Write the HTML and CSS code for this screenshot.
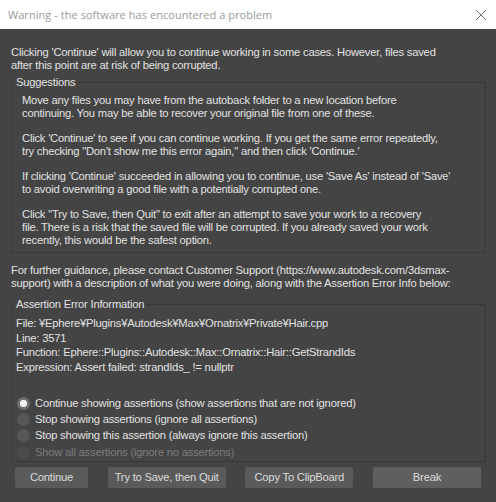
FILE: index.html
```html
<!DOCTYPE html>
<html>
<head>
<meta charset="utf-8">
<link rel="stylesheet" href="styles.css">
</head>
<body>
<div class="window">
  <div class="titlebar">
    <span class="title">Warning - the software has encountered a problem</span>
    <svg class="close" width="12" height="12" viewBox="0 0 12 12"><path d="M1 1 L11 11 M11 1 L1 11" stroke="#7a7a7a" stroke-width="1" fill="none"/></svg>
  </div>
  <div class="content">
    <p class="intro">Clicking 'Continue' will allow you to continue working in some cases. However, files saved<br>after this point are at risk of being corrupted.</p>
    <fieldset class="group suggestions">
      <legend>Suggestions</legend>
      <p class="para first">Move any files you may have from the autoback folder to a new location before<br>continuing. You may be able to recover your original file from one of these.</p>
      <p class="para">Click 'Continue' to see if you can continue working. If you get the same error repeatedly,<br>try checking "Don't show me this error again," and then click 'Continue.'</p>
      <p class="para">If clicking 'Continue' succeeded in allowing you to continue, use 'Save As' instead of 'Save'<br>to avoid overwriting a good file with a potentially corrupted one.</p>
      <p class="para">Click "Try to Save, then Quit" to exit after an attempt to save your work to a recovery<br>file. There is a risk that the saved file will be corrupted. If you already saved your work<br>recently, this would be the safest option.</p>
    </fieldset>
    <p class="guidance">For further guidance, please contact Customer Support (https://www.autodesk.com/3dsmax-<br>support) with a description of what you were doing, along with the Assertion Error Info below:</p>
    <fieldset class="group assertion">
      <legend>Assertion Error Information</legend>
      <div class="info first">File: ¥Ephere¥Plugins¥Autodesk¥Max¥Ornatrix¥Private¥Hair.cpp</div>
      <div class="info">Line: 3571</div>
      <div class="info">Function: Ephere::Plugins::Autodesk::Max::Ornatrix::Hair::GetStrandIds</div>
      <div class="info">Expression: Assert failed: strandIds_ != nullptr</div>
      <div class="radios">
        <div class="radio"><span class="dot checked"></span><span>Continue showing assertions (show assertions that are not ignored)</span></div>
        <div class="radio"><span class="dot"></span><span>Stop showing assertions (ignore all assertions)</span></div>
        <div class="radio"><span class="dot"></span><span>Stop showing this assertion (always ignore this assertion)</span></div>
        <div class="radio disabled"><span class="dot"></span><span>Show all assertions (ignore no assertions)</span></div>
      </div>
    </fieldset>
    <div class="buttons">
      <div class="btn w73">Continue</div>
      <div class="btn w118">Try to Save, then Quit</div>
      <div class="btn w108">Copy To ClipBoard</div>
      <div class="btn w108 default">Break</div>
    </div>
  </div>
</div>
</body>
</html>
```
FILE: styles.css
```css
html, body {
  margin: 0;
  padding: 0;
}
body {
  width: 496px;
  height: 502px;
  overflow: hidden;
  background: #444444;
}
.window {
  display: flex;
  flex-direction: column;
  height: 502px;
}
.titlebar {
  height: 29px;
  background: #ffffff;
  display: flex;
  align-items: center;
  justify-content: space-between;
  padding: 0 9px 0 8px;
  box-sizing: border-box;
}
.title {
  font-family: "Open Sans", "Liberation Sans", sans-serif;
  font-size: 11px;
  color: #9a9a9a;
  letter-spacing: 0.05px;
  margin-top: -1px;
}
.close {
  display: block;
}
.content {
  flex: 1;
  padding: 17px 10px 0 11px;
  font-family: "Liberation Sans", Arial, sans-serif;
  font-size: 11.2px;
  line-height: 13px;
  letter-spacing: -0.2px;
  color: #e2e2e2;
  white-space: nowrap;
}
p {
  margin: 0;
}
.group {
  margin: 0;
  padding: 0;
  border: 1px solid #393939;
  border-radius: 2px;
  min-width: 0;
}
.group legend {
  margin-left: 2px;
  padding: 0 2px;
  line-height: 13px;
}
.suggestions {
  margin-top: 4px;
  padding-bottom: 5px;
}
.para {
  padding-left: 10px;
  margin-top: 12px;
}
.para.first {
  margin-top: 5px;
}
.guidance {
  margin-top: 11px;
}
.assertion {
  margin-top: 8px;
  padding-bottom: 1px;
}
.info {
  padding-left: 4px;
  line-height: 14.5px;
}
.info.first {
  margin-top: 5px;
}
.radios {
  margin-top: 21px;
  display: flex;
  flex-direction: column;
}
.radio {
  height: 16.33px;
  display: flex;
  align-items: center;
  padding-left: 5px;
}
.dot {
  width: 13px;
  height: 13px;
  border-radius: 50%;
  background: #565656;
  margin-right: 5px;
  flex: none;
  box-sizing: border-box;
}
.dot.checked {
  background: radial-gradient(circle, #f2f2f2 0 3.4px, #6e6e6e 3.9px);
}
.radio.disabled {
  color: #7c7c7c;
}
.radio.disabled .dot {
  background: #4b4b4b;
}
.buttons {
  margin: 5px 5px 0 4px;
  display: flex;
  justify-content: space-between;
}
.btn {
  height: 21px;
  line-height: 21px;
  text-align: center;
  background: #5a5a5a;
  color: #dadada;
  border-radius: 2px;
  box-sizing: border-box;
}
.btn.default {
  background: #5f5f5f;
}
.w73 { width: 73px; }
.w118 { width: 118px; }
.w108 { width: 108px; }
```
